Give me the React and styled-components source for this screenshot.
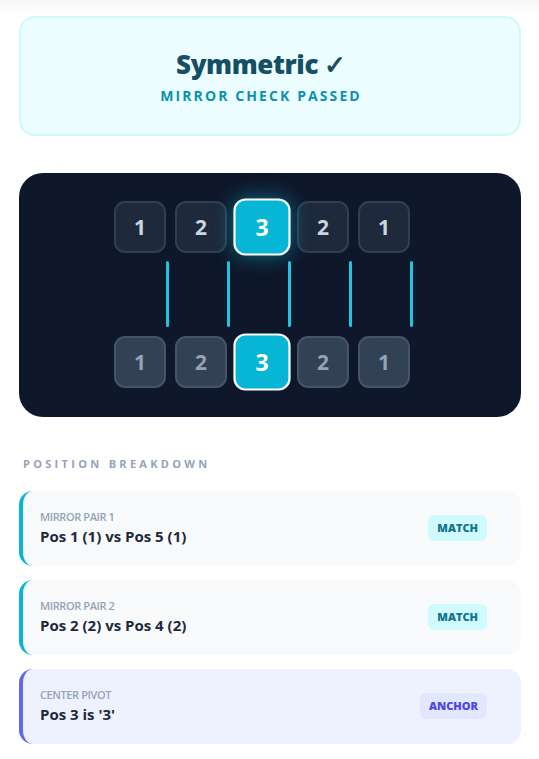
import React from 'react';
import styled, { createGlobalStyle, css } from 'styled-components';

const GlobalStyle = createGlobalStyle`
  html, body {
    margin: 0;
    padding: 0;
    background: #fff;
  }
  body {
    font-family: 'Open Sans', 'Noto Sans', sans-serif;
  }
`;

const top = [1, 2, 3, 2, 1];

const pairs = [
  { label: 'MIRROR PAIR 1', text: 'Pos 1 (1) vs Pos 5 (1)', badge: 'MATCH' },
  { label: 'MIRROR PAIR 2', text: 'Pos 2 (2) vs Pos 4 (2)', badge: 'MATCH' },
  { label: 'CENTER PIVOT', text: "Pos 3 is '3'", badge: 'ANCHOR', pivot: true },
];

export default function App() {
  return (
    <Page>
      <GlobalStyle />
      <StatusCard>
        <Title>Symmetric ✓</Title>
        <Subtitle>MIRROR CHECK PASSED</Subtitle>
      </StatusCard>

      <MirrorPanel>
        <Stack>
          <Row>
            {top.map((n, i) => (
              <Cell key={i} $center={i === 2} $glow>
                {n}
              </Cell>
            ))}
          </Row>
          <Lines>
            {top.map((_, i) => (
              <Line key={i} />
            ))}
          </Lines>
          <Row>
            {top.map((n, i) => (
              <Cell key={i} $center={i === 2} $reflected>
                {n}
              </Cell>
            ))}
          </Row>
        </Stack>
      </MirrorPanel>

      <SectionTitle>POSITION BREAKDOWN</SectionTitle>
      <List>
        {pairs.map((p) => (
          <PairCard key={p.label} $pivot={p.pivot}>
            <PairInfo>
              <PairLabel>{p.label}</PairLabel>
              <PairText>{p.text}</PairText>
            </PairInfo>
            <Badge $pivot={p.pivot}>{p.badge}</Badge>
          </PairCard>
        ))}
      </List>
    </Page>
  );
}

const Page = styled.div`
  min-height: 759px;
  box-sizing: border-box;
  padding: 16px 18px 15px 19px;
  background: linear-gradient(#f4f6f9 0px, #ffffff 14px);
`;

const StatusCard = styled.div`
  height: 120px;
  box-sizing: border-box;
  border: 2px solid #cff8fd;
  border-radius: 16px;
  background: #ecfeff;
  display: flex;
  flex-direction: column;
  align-items: center;
  justify-content: center;
  gap: 6px;
  padding: 1px 18px 0 0;
`;

const Title = styled.div`
  font-size: 26px;
  font-weight: 800;
  color: #164e63;
  letter-spacing: -0.4px;
  line-height: 32px;
`;

const Subtitle = styled.div`
  font-size: 14px;
  font-weight: 700;
  color: #0891b2;
  letter-spacing: 2.1px;
  line-height: 20px;
`;

const MirrorPanel = styled.div`
  margin-top: 37px;
  height: 244px;
  box-sizing: border-box;
  border-radius: 24px;
  background: #0f172a;
  padding: 28px 0 0 95px;
`;

const Stack = styled.div`
  display: flex;
  flex-direction: column;
  width: 300px;
`;

const Row = styled.div`
  display: flex;
  gap: 9px;
`;

const Cell = styled.div`
  width: 52px;
  height: 52px;
  box-sizing: border-box;
  border-radius: 11px;
  display: flex;
  align-items: center;
  justify-content: center;
  font-size: 21px;
  font-weight: 700;
  border: 2px solid ${(p) => (p.$reflected ? '#46546a' : '#323e51')};
  background: ${(p) => (p.$reflected ? '#334155' : '#1e293b')};
  color: ${(p) => (p.$reflected ? '#94a3b8' : '#cbd5e1')};

  ${(p) =>
    p.$center &&
    css`
      background: #06b6d4;
      border-color: #ffffff;
      color: #ffffff;
      transform: scale(1.1);
    `}

  ${(p) =>
    p.$center &&
    p.$glow &&
    css`
      box-shadow: 0 0 18px rgba(6, 182, 212, 0.55);
    `}
`;

const Lines = styled.div`
  display: flex;
  gap: 58px;
  height: 66px;
  margin: 8px 0 9px 52px;
`;

const Line = styled.div`
  width: 3px;
  height: 100%;
  border-radius: 2px;
  background: #22c3e0;
`;

const SectionTitle = styled.div`
  margin: 39px 0 0 4px;
  font-size: 11px;
  font-weight: 700;
  letter-spacing: 3.3px;
  color: #94a3b8;
  line-height: 16px;
`;

const List = styled.div`
  margin-top: 19px;
  display: flex;
  flex-direction: column;
  gap: 14px;
`;

const PairCard = styled.div`
  height: 75px;
  box-sizing: border-box;
  border-radius: 14px;
  border-left: 4px solid ${(p) => (p.$pivot ? '#6366f1' : '#06b6d4')};
  background: ${(p) => (p.$pivot ? '#eef2ff' : '#f8fafc')};
  display: flex;
  align-items: center;
  justify-content: space-between;
  padding: 0 34px 2px 17px;
`;

const PairInfo = styled.div`
  display: flex;
  flex-direction: column;
  gap: 2px;
`;

const PairLabel = styled.div`
  font-size: 11px;
  font-weight: 600;
  color: #94a3b8;
  letter-spacing: -0.4px;
  line-height: 14px;
`;

const PairText = styled.div`
  font-size: 15px;
  font-weight: 700;
  color: #1e293b;
  line-height: 20px;
`;

const Badge = styled.div`
  height: 26px;
  padding: 0 9px;
  border-radius: 6px;
  display: flex;
  align-items: center;
  font-size: 11px;
  font-weight: 800;
  background: ${(p) => (p.$pivot ? '#e0e7ff' : '#cffafe')};
  color: ${(p) => (p.$pivot ? '#4f46e5' : '#0e7490')};
`;
